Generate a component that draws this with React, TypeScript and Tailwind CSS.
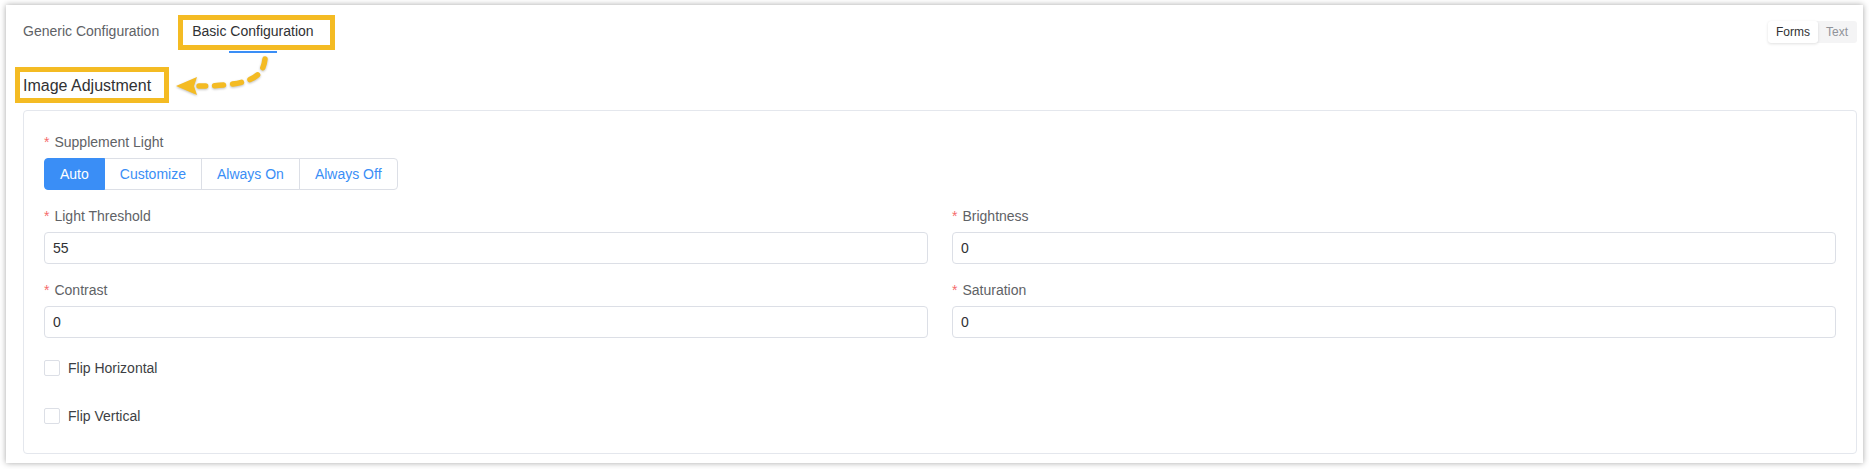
import { useState } from 'react';

const YELLOW = '#f4bb23';

function FieldLabel({ text }: { text: string }) {
  return (
    <div className="flex items-center h-[20px] leading-[20px] text-[14px] text-[#606266] mb-[6px]">
      <span className="text-[#f56c6c] mr-[5px]">*</span>
      <span>{text}</span>
    </div>
  );
}

function TextField({ label, value }: { label: string; value: string }) {
  return (
    <div>
      <FieldLabel text={label} />
      <input
        readOnly
        value={value}
        className="w-full h-8 border border-[#dcdfe6] rounded-[4px] px-2 text-[14px] text-[#303133] outline-none bg-white"
      />
    </div>
  );
}

function Checkbox({ label }: { label: string }) {
  const [checked, setChecked] = useState(false);
  return (
    <label className="flex items-center h-8 cursor-pointer" onClick={() => setChecked(!checked)}>
      <span
        className={
          checked
            ? 'w-4 h-4 rounded-[2px] border border-[#3a8ef6] bg-[#3a8ef6]'
            : 'w-4 h-4 rounded-[2px] border border-[#dcdfe6] bg-white'
        }
      />
      <span className="ml-2 text-[14px] text-[#3d3f44]">{label}</span>
    </label>
  );
}

const modes = ['Auto', 'Customize', 'Always On', 'Always Off'];

export default function App() {
  const [mode, setMode] = useState('Auto');
  const [view, setView] = useState('Forms');

  return (
    <div className="w-[1869px] h-[469px] bg-white pt-[5px] px-[6px] font-['Liberation_Sans',Arial,sans-serif]">
      <div className="relative h-[458px] bg-white shadow-[0_0_6px_rgba(0,0,0,0.35)] pl-[17px] pr-[6px]">
        {/* tabs */}
        <div className="flex justify-between items-start h-[48px] pt-[16px]">
          <div className="flex items-start gap-[33px]">
            <div className="leading-[20px] text-[14px] text-[#606266]">Generic Configuration</div>
            <div className="relative flex flex-col items-center">
              <div className="leading-[20px] text-[14px] text-[#303133]">Basic Configuration</div>
              <div className="mt-[10px] h-[2px] w-[48px] bg-[#3a8ef6]" />
              <div className="absolute left-[-14px] top-[-6px] w-[157px] h-[35px] border-[5px] border-[#f4bb23]" />
            </div>
          </div>
          <div className="flex h-[22px] bg-[#f4f4f5] rounded-[3px] text-[12px]">
            {['Forms', 'Text'].map((v) => (
              <button
                key={v}
                onClick={() => setView(v)}
                className={
                  view === v
                    ? 'h-[22px] px-2 bg-white rounded-[3px] shadow-[0_1px_3px_rgba(0,0,0,0.12)] text-[#303133]'
                    : 'h-[22px] pl-2 pr-[9px] text-[#909399]'
                }
              >
                {v}
              </button>
            ))}
          </div>
        </div>

        {/* annotation arrow */}
        <svg
          className="absolute left-[165px] top-[50px]"
          width="110"
          height="50"
          viewBox="0 0 110 50"
          style={{ filter: 'drop-shadow(0 1px 1px rgba(0,0,0,0.25))' }}
        >
          <path
            d="M94 4 C92 22 80 31 28 31"
            fill="none"
            stroke={YELLOW}
            strokeWidth="5.5"
            strokeLinecap="round"
            strokeDasharray="9 9"
          />
          <polygon points="5,31 26,22 23,31 26,40" fill={YELLOW} />
        </svg>

        {/* section title */}
        <div className="relative mt-[21px] w-fit">
          <div className="leading-[24px] text-[16px] text-[#303133]">Image Adjustment</div>
          <div className="absolute left-[-8px] top-[-7px] w-[154px] h-[36px] border-[5px] border-[#f4bb23]" />
        </div>

        {/* card */}
        <div className="mt-[12px] border border-[#e4e7ed] rounded-[4px] pt-[21px] px-5 pb-[21px]">
          <FieldLabel text="Supplement Light" />
          <div className="flex mb-4">
            {modes.map((m, i) => (
              <button
                key={m}
                onClick={() => setMode(m)}
                className={[
                  'h-8 px-[15px] border text-[14px]',
                  i === 0 ? 'rounded-l-[4px]' : '-ml-px',
                  i === modes.length - 1 ? 'rounded-r-[4px]' : '',
                  mode === m
                    ? 'bg-[#3a8ef6] border-[#3a8ef6] text-white relative'
                    : 'bg-white border-[#dcdfe6] text-[#3a8ef6]',
                ].join(' ')}
              >
                {m}
              </button>
            ))}
          </div>

          <div className="grid grid-cols-2 gap-x-6 gap-y-4">
            <TextField label="Light Threshold" value="55" />
            <TextField label="Brightness" value="0" />
            <TextField label="Contrast" value="0" />
            <TextField label="Saturation" value="0" />
          </div>

          <div className="mt-[14px] flex flex-col gap-4">
            <Checkbox label="Flip Horizontal" />
            <Checkbox label="Flip Vertical" />
          </div>
        </div>
      </div>
    </div>
  );
}
